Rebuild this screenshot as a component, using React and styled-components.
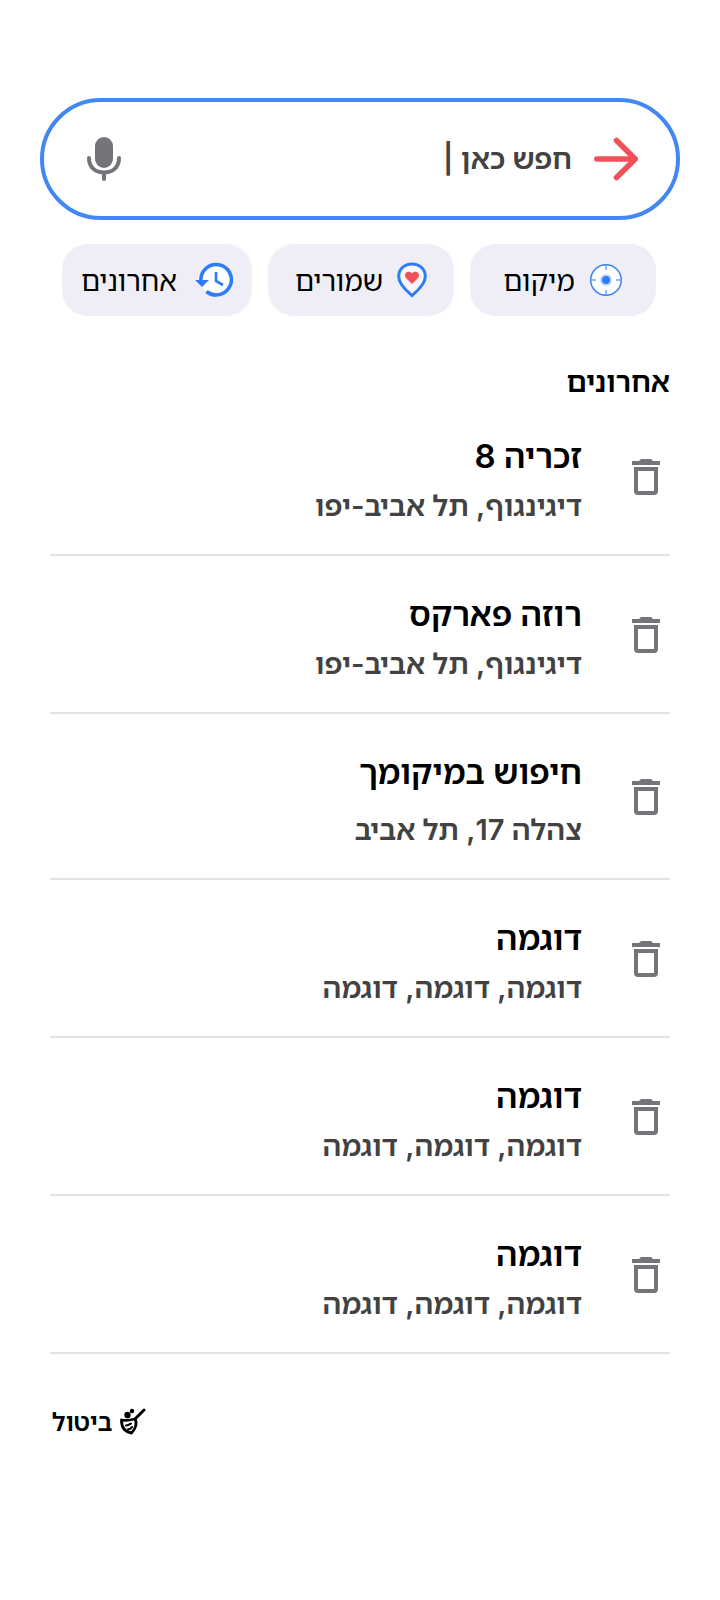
import styled, { createGlobalStyle } from "styled-components";

const places = [
  { title: "זכריה 8", address: "דיגינגוף, תל אביב-יפו" },
  { title: "רוזה פארקס", address: "דיגינגוף, תל אביב-יפו" },
  { title: "חיפוש במיקומך", address: "צהלה 17, תל אביב", spaced: true },
  { title: "דוגמה", address: "דוגמה, דוגמה, דוגמה" },
  { title: "דוגמה", address: "דוגמה, דוגמה, דוגמה" },
  { title: "דוגמה", address: "דוגמה, דוגמה, דוגמה" },
];

function App() {
  return (
    <Wrapper dir="rtl" lang="he">
      <GlobalStyle />
      <SearchBar role="search">
        <IconButton type="button" aria-label="חזרה">
          <svg width="44" height="44" viewBox="0 0 44 44" fill="none" stroke="#F0525A" strokeWidth="5.600" strokeLinecap="round" strokeLinejoin="round">
            <path d="M2.800 22H41.200M22.500 3.500L41.200 22L22.500 40.500" />
          </svg>
        </IconButton>
        <SearchInput type="text" aria-label="חיפוש" defaultValue="חפש כאן |" />
        <IconButton type="button" aria-label="חיפוש קולי">
          <svg width="36" height="44" viewBox="0 0 36 44" fill="none">
            <rect x="9" y="0" width="18" height="31" rx="9" fill="#757479" />
            <path d="M3 21C3 30 9 35.500 18 35.500C27 35.500 33 30 33 21M18 36V42" stroke="#757479" strokeWidth="4" strokeLinecap="round" />
          </svg>
        </IconButton>
      </SearchBar>

      <Chips>
        <Chip type="button">
          <svg width="34" height="34" viewBox="0 0 34 34" fill="none">
            <circle cx="17" cy="17" r="15.300" fill="#fff" stroke="#2F7CF6" strokeWidth="1.400" />
            <path d="M17 2V7M17 27V32M2 17H7M27 17H32" stroke="#6FA3F8" strokeWidth="1.500" />
            <circle cx="17" cy="17" r="6" fill="#C1D7FB" />
            <circle cx="17" cy="17" r="4" fill="#2F7CF6" />
          </svg>
          מיקום
        </Chip>
        <Chip type="button">
          <svg width="30" height="36" viewBox="0 0 30 36" fill="none">
            <path d="M15 33.500C11 30 1.700 23 1.700 14.500C1.700 7 7.500 2 15 2C22.500 2 28.300 7 28.300 14.500C28.300 23 19 30 15 33.500Z" fill="#FCF7FA" stroke="#2F7CF6" strokeWidth="3" />
            <path d="M15 22L9.500 16.500C7.500 14.500 7.500 12 9.300 10.500C11 9.200 13.500 9.500 15 11.500C16.500 9.500 19 9.200 20.700 10.500C22.500 12 22.500 14.500 20.500 16.500Z" fill="#F0525A" />
          </svg>
          שמורים
        </Chip>
        <Chip type="button" $wide>
          <HistoryIcon />
          אחרונים
        </Chip>
      </Chips>

      <Heading>אחרונים</Heading>
      <List>
        {places.map((place, i) => (
          <Row key={i}>
            <DeleteButton type="button" aria-label="מחיקה">
              <TrashIcon />
            </DeleteButton>
            <Details $spaced={place.spaced}>
              <h3>{place.title}</h3>
              <p>{place.address}</p>
            </Details>
          </Row>
        ))}
      </List>

      <ClearButton type="button">
        <BroomIcon />
        ביטול
      </ClearButton>
    </Wrapper>
  );
}

function HistoryIcon() {
  return (
    <svg width="38" height="36" viewBox="0 0 38 36" fill="none">
      <circle cx="21" cy="18" r="15" fill="#fff" />
      <path d="M6 19A15.200 15.200 0 1 1 11.500 29.500" stroke="#2F7CF6" strokeWidth="3.600" />
      <path d="M0 18H14L7 25Z" fill="#2F7CF6" />
      <path d="M21 10V19L28 23" stroke="#2F7CF6" strokeWidth="2.600" />
    </svg>
  );
}

function TrashIcon() {
  return (
    <svg width="28" height="36" viewBox="0 0 28 36" fill="none">
      <path d="M0 2H7L9 0H19L21 2H28V6H0Z" fill="#757479" />
      <path d="M4 10H24V32Q24 34 22 34H6Q4 34 4 32Z" stroke="#757479" strokeWidth="4" />
    </svg>
  );
}

function BroomIcon() {
  return (
    <svg width="26" height="28" viewBox="0 0 26 28" fill="none" stroke="#000" strokeLinecap="round" strokeLinejoin="round">
      <path d="M24 2L15 11" strokeWidth="3" />
      <path d="M1.500 12C6 13 11 12 15 11C17.500 15 15.500 21 11.500 25C5 24 1.500 19 1.500 12Z" strokeWidth="2.800" />
      <path d="M6 17.500C8.500 17.500 9.500 16.500 11 15.500M8 21.500C10.500 21 11.500 20 12 19" strokeWidth="2" />
      <circle cx="7.500" cy="7" r="3.200" fill="#000" stroke="none" />
      <circle cx="12" cy="3" r="2.200" fill="#000" stroke="none" />
    </svg>
  );
}

const GlobalStyle = createGlobalStyle`
  * {
    box-sizing: border-box;
  }
  body {
    margin: 0;
    background: #fff;
    color: #000;
    font-family: "Inter", "Noto Sans Hebrew", "Open Sans", sans-serif;
  }
  button, input {
    font-family: inherit;
    color: inherit;
  }
  svg {
    display: block;
    flex-shrink: 0;
  }
`;

const Wrapper = styled.main`
  padding: 98px 40px 160px;
`;

const SearchBar = styled.form`
  display: flex;
  align-items: center;
  gap: 22px;
  height: 122px;
  padding: 0 38px 0 42px;
  border: 4px solid #4387f5;
  border-radius: 61px;
`;

const IconButton = styled.button`
  padding: 0;
  border: 0;
  background: none;
  cursor: pointer;
`;

const DeleteButton = styled(IconButton)`
  padding-bottom: 6px;
`;

const SearchInput = styled.input`
  flex: 1;
  min-width: 0;
  padding: 0;
  border: 0;
  outline: 0;
  background: none;
  color: #424242;
  font-size: 29px;
  font-weight: 600;
  line-height: 40px;
`;

const Chips = styled.div`
  display: flex;
  gap: 16px;
  margin-top: 24px;
  padding: 0 24px 0 22px;
`;

const Chip = styled.button`
  display: flex;
  flex: ${({ $wide }) => ($wide ? 190 : 186)} 1 0;
  align-items: center;
  justify-content: center;
  gap: ${({ $wide }) => ($wide ? 18 : 14)}px;
  height: 72px;
  padding: 0;
  border: 0;
  border-radius: 26px;
  background: #efeef7;
  font-size: 28px;
  cursor: pointer;
`;

const Heading = styled.h2`
  margin: 46px 10px 0;
  font-size: 29px;
  font-weight: 600;
  line-height: 40px;
`;

const List = styled.ul`
  margin: 0 10px;
  padding: 0;
  list-style: none;
`;

const Row = styled.li`
  display: flex;
  align-items: center;
  gap: 50px;
  padding: 36px 10px 28px;
  border-bottom: 2px solid #e2e2e2;

  &:first-child {
    padding-top: 32px;
  }
`;

const Details = styled.div`
  h3 {
    margin: 0;
    font-size: 33px;
    font-weight: 600;
    line-height: 44px;
  }
  p {
    margin: ${({ $spaced }) => ($spaced ? 16 : 8)}px 0 0;
    color: #424242;
    font-size: 29px;
    font-weight: 600;
    line-height: 40px;
  }
`;

const ClearButton = styled.button`
  display: flex;
  align-items: center;
  gap: 8px;
  margin: 52px auto 0 12px;
  padding: 0;
  border: 0;
  background: none;
  font-size: 25px;
  font-weight: 600;
  line-height: 32px;
  cursor: pointer;
`;

export default App;
